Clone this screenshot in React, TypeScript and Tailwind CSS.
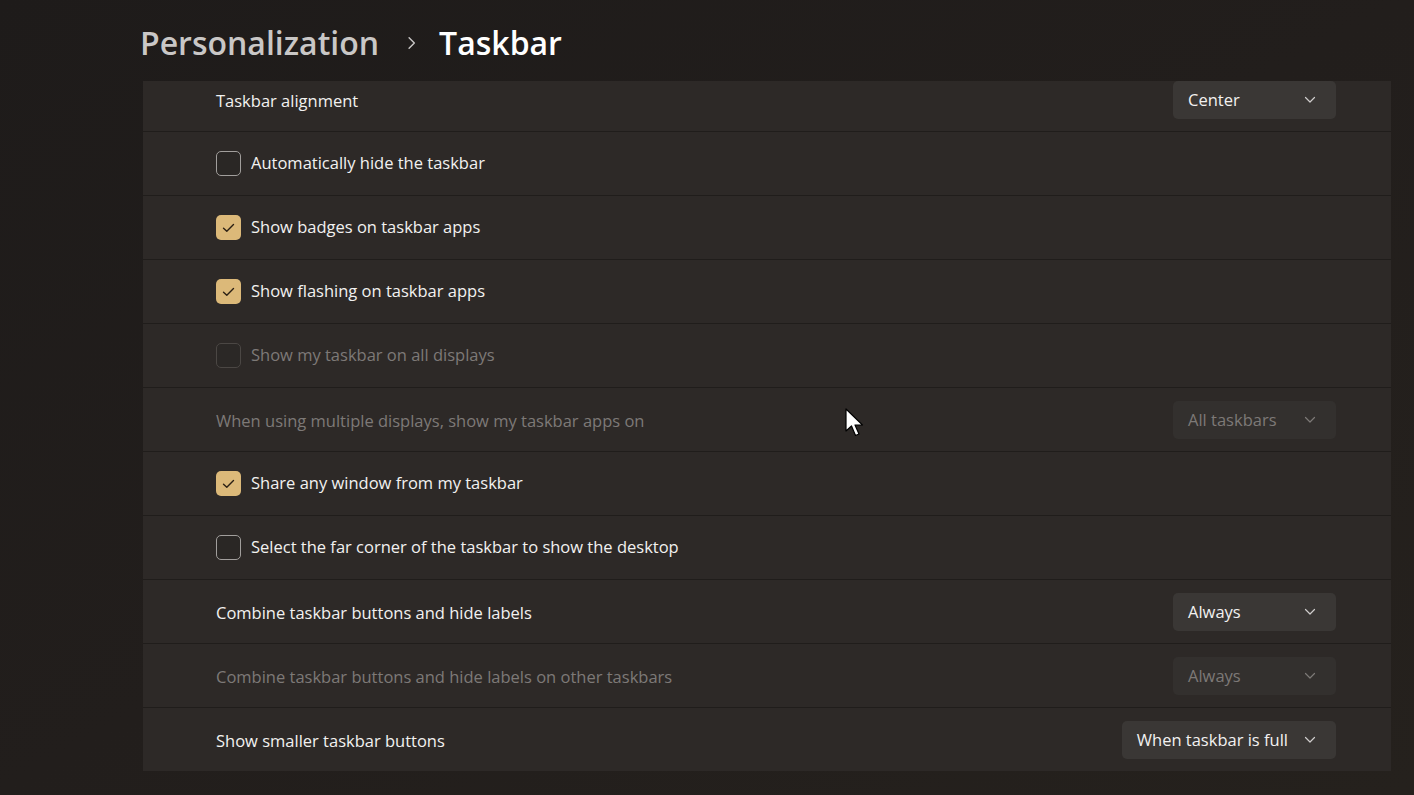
import React from 'react';

type Row =
  | { kind: 'select'; label: string; value: string; disabled?: boolean }
  | { kind: 'check'; label: string; checked?: boolean; disabled?: boolean };

const rows: Row[] = [
  { kind: 'select', label: 'Taskbar alignment', value: 'Center' },
  { kind: 'check', label: 'Automatically hide the taskbar' },
  { kind: 'check', label: 'Show badges on taskbar apps', checked: true },
  { kind: 'check', label: 'Show flashing on taskbar apps', checked: true },
  { kind: 'check', label: 'Show my taskbar on all displays', disabled: true },
  { kind: 'select', label: 'When using multiple displays, show my taskbar apps on', value: 'All taskbars', disabled: true },
  { kind: 'check', label: 'Share any window from my taskbar', checked: true },
  { kind: 'check', label: 'Select the far corner of the taskbar to show the desktop' },
  { kind: 'select', label: 'Combine taskbar buttons and hide labels', value: 'Always' },
  { kind: 'select', label: 'Combine taskbar buttons and hide labels on other taskbars', value: 'Always', disabled: true },
  { kind: 'select', label: 'Show smaller taskbar buttons', value: 'When taskbar is full' },
];

const Chevron = ({ className }: { className?: string }) => (
  <svg width="12" height="8" viewBox="0 0 12 8" className={className}>
    <polyline points="1.5,1.5 6,6 10.5,1.5" fill="none" stroke="currentColor" strokeWidth="1.2" strokeLinecap="round" strokeLinejoin="round" />
  </svg>
);

const Checkbox = ({ checked, disabled }: { checked?: boolean; disabled?: boolean }) => {
  if (checked) {
    return (
      <div className="w-[25px] h-[25px] rounded-[5px] bg-[#dcb979] flex items-center justify-center">
        <svg width="13" height="10" viewBox="0 0 13 10">
          <polyline points="1.5,5.2 4.8,8.3 11.5,1.6" fill="none" stroke="#2b2014" strokeWidth="1.4" strokeLinecap="round" strokeLinejoin="round" />
        </svg>
      </div>
    );
  }
  return (
    <div
      className={
        disabled
          ? 'w-[25px] h-[25px] rounded-[5px] border border-[#4b4744] bg-[#2b2826]'
          : 'w-[25px] h-[25px] rounded-[5px] border border-[#a19e9c] bg-[#2a2725]'
      }
    />
  );
};

const Select = ({ value, disabled }: { value: string; disabled?: boolean }) => (
  <div
    className={
      disabled
        ? 'h-[38px] min-w-[163px] rounded-[5px] bg-[#33302e] text-[#7d7977] flex items-center justify-between gap-4 pl-[15px] pr-[20px]'
        : 'h-[38px] min-w-[163px] rounded-[5px] bg-[#3a3735] text-[#f2f1f0] flex items-center justify-between gap-4 pl-[15px] pr-[20px]'
    }
  >
    <span className="mt-[2px]">{value}</span>
    <Chevron className={disabled ? 'text-[#7d7977]' : 'text-[#cfcdcc]'} />
  </div>
);

const App: React.FC = () => {
  return (
    <div className="relative w-full h-[795px] overflow-hidden bg-gradient-to-br from-[#1e1b1a] via-[#221e1c] to-[#25211d] font-['Segoe_UI','Open_Sans',sans-serif] text-[16.5px]">
      <div className="h-[81px] pt-[5px] pl-[140px] flex items-center text-[32px] font-semibold">
        <span className="text-[#c9c7c6] mr-[26px]">Personalization</span>
        <Chevron className="text-[#c9c7c6] -rotate-90 w-[14px] h-[10px]" />
        <span className="text-white ml-[20px]">Taskbar</span>
      </div>

      <div className="ml-[143px] w-[1248px] h-[690px] overflow-hidden">
        <div className="-mt-[13px] flex flex-col gap-px bg-[#201d1b]">
          {rows.map((row) => (
            <div
              key={row.label}
              className="h-[63px] bg-[#2d2927] pl-[73px] pr-[55px] flex items-center justify-between"
            >
              {row.kind === 'check' ? (
                <div className="flex items-center gap-[10px]">
                  <Checkbox checked={row.checked} disabled={row.disabled} />
                  <span className={row.disabled ? 'text-[#7d7977]' : 'text-[#f2f1f0]'}>{row.label}</span>
                </div>
              ) : (
                <>
                  <span className={row.disabled ? 'mt-[3px] text-[#7d7977]' : 'mt-[3px] text-[#f2f1f0]'}>{row.label}</span>
                  <Select value={row.value} disabled={row.disabled} />
                </>
              )}
            </div>
          ))}
        </div>
      </div>

      <svg className="absolute left-[845px] top-[408px]" width="20" height="30" viewBox="0 0 20 30">
        <path d="M1 1 L1 23 L6.5 18 L10.5 27.5 L14 26 L10 17 L17.5 17 Z" fill="#ffffff" stroke="#000000" strokeWidth="1.2" strokeLinejoin="round" />
      </svg>
    </div>
  );
};

export default App;
